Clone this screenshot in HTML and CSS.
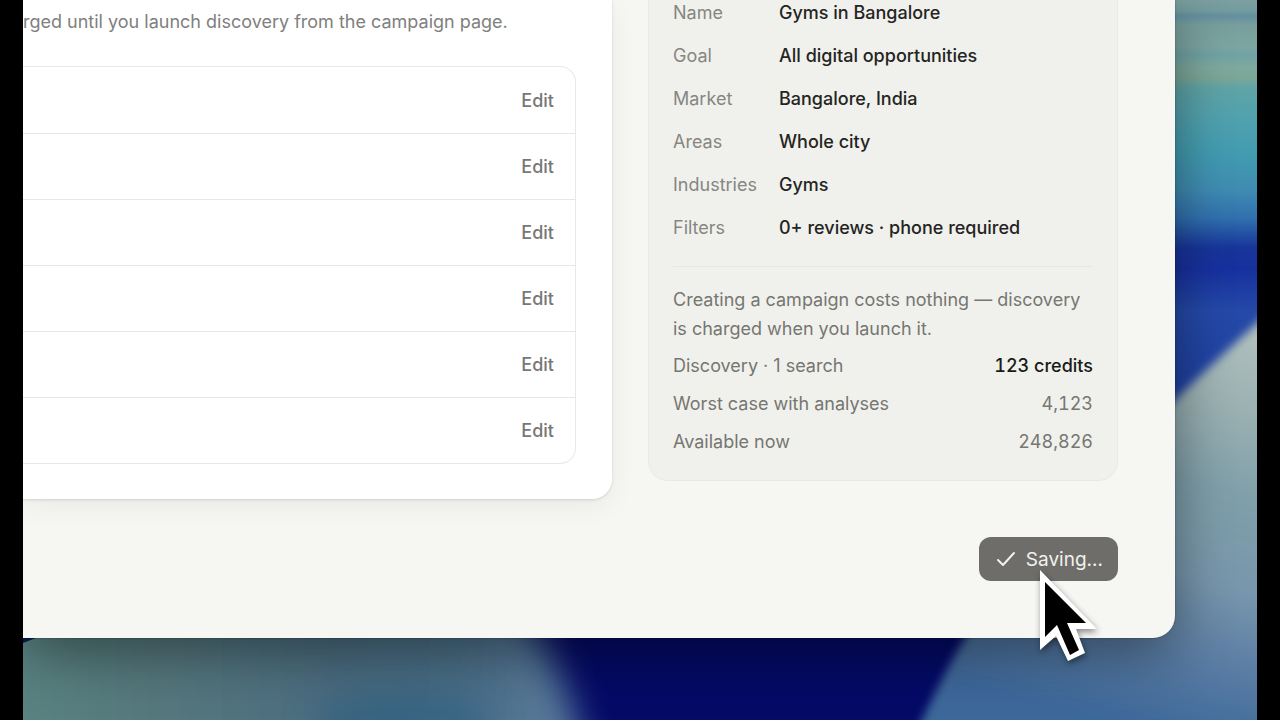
FILE: index.html
```html
<!DOCTYPE html>
<html lang="en">
<head>
<meta charset="utf-8">
<title>New campaign</title>
<link rel="stylesheet" href="styles.css">
</head>
<body>
<div class="desktop">
  <svg class="wallpaper" viewBox="0 0 1234 720" preserveAspectRatio="none" aria-hidden="true">
    <defs>
      <linearGradient id="sky" gradientUnits="userSpaceOnUse" x1="1193" y1="0" x2="1193" y2="420">
        <stop offset="0" stop-color="#7c9fa0"/>
        <stop offset=".025" stop-color="#749c9e"/>
        <stop offset=".038" stop-color="#6390a0"/>
        <stop offset=".06" stop-color="#789f9d"/>
        <stop offset=".11" stop-color="#7ca5a1"/>
        <stop offset=".13" stop-color="#70a3a5"/>
        <stop offset=".16" stop-color="#7ea99e"/>
        <stop offset=".185" stop-color="#7ba797"/>
        <stop offset=".21" stop-color="#5fa4a6"/>
        <stop offset=".29" stop-color="#4fa1af"/>
        <stop offset=".37" stop-color="#419bb0"/>
        <stop offset=".45" stop-color="#3f8cb2"/>
        <stop offset=".52" stop-color="#3070ae"/>
        <stop offset=".59" stop-color="#17359a"/>
        <stop offset=".64" stop-color="#17309e"/>
        <stop offset=".74" stop-color="#2449a8"/>
        <stop offset="1" stop-color="#1c3c9c"/>
      </linearGradient>
      <linearGradient id="dune" gradientUnits="userSpaceOnUse" x1="1230" y1="330" x2="1130" y2="730">
        <stop offset="0" stop-color="#b0c0bc"/>
        <stop offset=".2" stop-color="#9ab0b2"/>
        <stop offset=".4" stop-color="#7f9fa9"/>
        <stop offset=".62" stop-color="#7896ac"/>
        <stop offset=".82" stop-color="#587ba3"/>
        <stop offset="1" stop-color="#3d689a"/>
      </linearGradient>
      <linearGradient id="hill" x1="0" y1="0" x2="1" y2="0">
        <stop offset="0" stop-color="#5c8a84"/>
        <stop offset=".3" stop-color="#56797d"/>
        <stop offset=".6" stop-color="#4c6d80"/>
        <stop offset=".8" stop-color="#4c6f88"/>
        <stop offset="1" stop-color="#5b7d9f"/>
      </linearGradient>
      <filter id="soft" x="-20%" y="-20%" width="140%" height="140%"><feGaussianBlur stdDeviation="5"/></filter>
      <filter id="softer" x="-20%" y="-50%" width="140%" height="200%"><feGaussianBlur stdDeviation="17"/></filter>
    </defs>
    <rect width="1234" height="720" fill="#040a66"/>
    <rect x="1060" width="174" height="450" fill="url(#sky)"/>
    <path d="M1260 300 C1190 362 1135 415 1100 455 C1010 520 940 625 888 745 L1260 745Z" fill="url(#dune)" filter="url(#soft)"/>
    <path d="M-80 560 H450 C508 610 543 660 568 780 H-80Z" fill="url(#hill)" filter="url(#softer)"/>
    <path d="M0 636 H18 L0 643Z" fill="#0b1a55"/>
    <ellipse cx="380" cy="725" rx="90" ry="35" fill="#255a80" opacity=".5" filter="url(#softer)"/>
  </svg>

  <div class="window">
    <main class="columns">
      <section class="card">
        <p class="intro">rged until you launch discovery from the campaign page.</p>
        <ul class="review">
          <li><button type="button">Edit</button></li>
          <li><button type="button">Edit</button></li>
          <li><button type="button">Edit</button></li>
          <li><button type="button">Edit</button></li>
          <li><button type="button">Edit</button></li>
          <li><button type="button">Edit</button></li>
        </ul>
      </section>
      <aside class="summary">
        <dl class="details">
          <dt>Name</dt><dd>Gyms in Bangalore</dd>
          <dt>Goal</dt><dd>All digital opportunities</dd>
          <dt>Market</dt><dd>Bangalore, India</dd>
          <dt>Areas</dt><dd>Whole city</dd>
          <dt>Industries</dt><dd>Gyms</dd>
          <dt>Filters</dt><dd>0+ reviews · phone required</dd>
        </dl>
        <div class="costs">
          <p>Creating a campaign costs nothing — discovery is charged when you launch it.</p>
          <dl>
            <div><dt>Discovery · 1 search</dt><dd class="strong">123 credits</dd></div>
            <div><dt>Worst case with analyses</dt><dd>4,123</dd></div>
            <div><dt>Available now</dt><dd>248,826</dd></div>
          </dl>
        </div>
      </aside>
    </main>
    <footer class="actions">
      <button type="button" class="save">
        <svg width="20" height="20" viewBox="0 0 20 20" aria-hidden="true"><path d="M2 11 L7 16 L18 4"/></svg>
        Saving…
      </button>
    </footer>
    <svg class="cursor" width="60" height="94" viewBox="0 0 60 94" aria-hidden="true">
      <path d="M0 0 V80 L16 66 L28 91 L45 83 L36 59 H57Z" fill="#fff"/>
      <path d="M5 12 V67 L17 55 L30 85 L39 80 L27 53 H46Z" fill="#000"/>
    </svg>
  </div>
</div>
</body>
</html>
```
FILE: styles.css
```css
* { box-sizing: border-box; }

body {
  margin: 0;
  background: #000;
  font-family: Inter, "Liberation Sans", sans-serif;
  font-size: 18px;
  line-height: 29px;
  color: #767672;
}

p, dl, dd, ul { margin: 0; padding: 0; }

button {
  border: 0;
  background: none;
  font: inherit;
  color: inherit;
  cursor: pointer;
}

.desktop {
  position: relative;
  min-height: 100vh;
  margin: 0 23px;
  padding-right: 82px;
  overflow: hidden;
}

.wallpaper {
  position: absolute;
  inset: 0;
  width: 100%;
  height: 100%;
}

.window {
  position: relative;
  padding: 0 57px 57px 0;
  background: #f6f7f3;
  border-radius: 0 0 22px 0;
  box-shadow: 0 0 2px rgba(0, 0, 0, .4), 0 16px 56px rgba(0, 0, 0, .42);
}

.columns {
  display: grid;
  grid-template-columns: 589fr 470fr;
  gap: 36px;
  align-items: start;
}

.card {
  padding: 7px 36px 35px 0;
  background: #fff;
  border-radius: 0 0 20px 0;
  box-shadow: 0 1px 3px rgba(0, 0, 0, .12), 0 8px 28px rgba(0, 0, 0, .05);
}

.intro {
  white-space: nowrap;
  color: #80807e;
}

.review {
  margin-top: 30px;
  list-style: none;
  border: solid #e8e8e8;
  border-width: 1px 1px 1px 0;
  border-radius: 0 16px 16px 0;
}

.review li {
  display: flex;
  justify-content: flex-end;
  align-items: center;
  height: 66px;
  padding-right: 21px;
}

.review li + li { border-top: 1px solid #e6e6e6; }

.review button {
  padding: 0;
  font-weight: 500;
  color: #777775;
}

.summary {
  padding: 1px 24px 24px;
  background: #f0f1ec;
  border: solid #e9eae6;
  border-width: 0 1px 1px;
  border-radius: 0 0 20px 20px;
}

.details {
  display: grid;
  grid-template-columns: 86px 1fr;
  gap: 19px 20px;
  line-height: 24px;
}

.details dt { color: #868683; }

.details dd {
  font-weight: 500;
  color: #242422;
}

.costs {
  margin-top: 26px;
  padding-top: 18px;
  border-top: 1px solid #e6e7e3;
}

.costs dl, .costs dl div { display: flex; }

.costs dl {
  flex-direction: column;
  gap: 9px;
  margin-top: 8px;
}

.costs dl div { justify-content: space-between; }

.costs dd { font-variant-numeric: tabular-nums; }

.costs .strong {
  font-weight: 500;
  color: #1a1a18;
}

.actions {
  display: flex;
  justify-content: flex-end;
  margin-top: 38px;
}

.save {
  display: flex;
  align-items: center;
  gap: 10px;
  height: 44px;
  padding: 0 15px 0 17px;
  border-radius: 12px;
  background: #6e6d69;
  color: #f1f1ee;
  font-size: 19px;
}

.save svg {
  fill: none;
  stroke: currentColor;
  stroke-width: 2;
  stroke-linecap: round;
  stroke-linejoin: round;
}

.cursor {
  position: absolute;
  top: 570px;
  right: 75px;
  overflow: visible;
  filter: drop-shadow(1px 3px 3px rgba(0, 0, 0, .45));
}
```
